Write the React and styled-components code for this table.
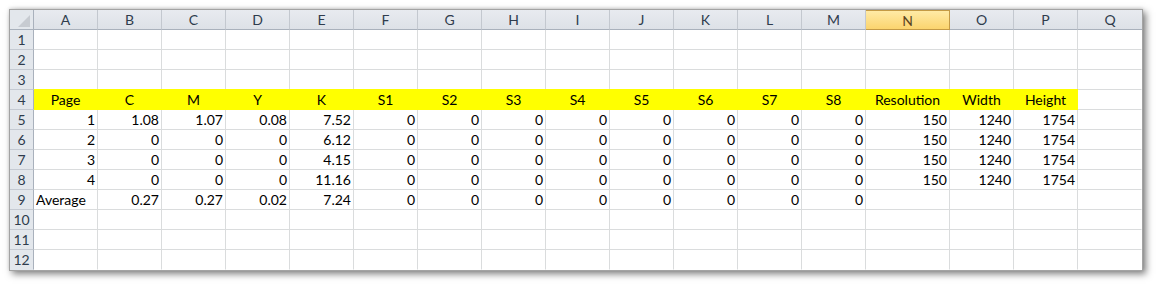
import React from 'react'
import styled, { createGlobalStyle, css } from 'styled-components'

const GlobalStyle = createGlobalStyle`
  html, body {
    margin: 0;
    padding: 0;
    background: #ffffff;
  }
`

const Page = styled.div`
  padding: 9px 0 0 9px;
  width: 1158px;
  height: 284px;
  box-sizing: border-box;
`

const Sheet = styled.div`
  display: grid;
  grid-template-columns: 24px repeat(13, 64px) 84px repeat(3, 64px);
  grid-auto-rows: 20px;
  width: max-content;
  border: 1px solid #a3a3a3;
  background: #ffffff;
  box-shadow: 3px 3px 7px rgba(0, 0, 0, 0.5), 0 -1px 3px rgba(0, 0, 0, 0.12);
  font-family: Lato, "Liberation Sans", sans-serif;
  font-size: 14px;
  color: #000000;
`

const Corner = styled.div`
  position: relative;
  box-sizing: border-box;
  background: #e3e7ec;
  border-right: 1px solid #a9b1bc;
  border-bottom: 1px solid #a9b1bc;
  svg {
    position: absolute;
    right: 3px;
    bottom: 2px;
  }
`

const ColHeader = styled.div`
  box-sizing: border-box;
  display: flex;
  align-items: center;
  justify-content: center;
  line-height: 19px;
  color: #2f3c4d;
  background: linear-gradient(#e8ebf0, #dde1e7);
  border-right: 1px solid #c3c8cf;
  border-bottom: 1px solid #a9b1bc;
  ${p => p.$selected && css`
    color: #5b4522;
    background: linear-gradient(#ffeaa6, #fbd46e);
    border: 1px solid #c49a45;
    border-left: none;
  `}
  ${p => p.$last && css`
    border-right: none;
  `}
`

const RowHeader = styled.div`
  box-sizing: border-box;
  display: flex;
  align-items: center;
  justify-content: center;
  line-height: 19px;
  color: #2f3c4d;
  background: #e3e7ec;
  border-right: 1px solid #a9b1bc;
  border-bottom: 1px solid ${p => (p.$last ? 'transparent' : '#c5cad2')};
`

const Cell = styled.div`
  box-sizing: border-box;
  padding: 0 2px;
  line-height: 19px;
  white-space: nowrap;
  overflow: hidden;
  text-align: ${p => p.$align};
  border-right: 1px solid ${p => (p.$lastCol ? 'transparent' : '#dadcdd')};
  border-bottom: 1px solid ${p => (p.$lastRow ? 'transparent' : '#dadcdd')};
  ${p => p.$fill && css`
    background: #ffff00;
    border-right-color: #ffff00;
    border-bottom-color: #ffff00;
    box-shadow: 0 -1px 0 #ffff00;
  `}
`

const columns = ['A', 'B', 'C', 'D', 'E', 'F', 'G', 'H', 'I', 'J', 'K', 'L', 'M', 'N', 'O', 'P', 'Q']

const zeros = Array(8).fill('0')
const dims = ['150', '1240', '1754']

const data = {
  4: ['Page', 'C', 'M', 'Y', 'K', 'S1', 'S2', 'S3', 'S4', 'S5', 'S6', 'S7', 'S8', 'Resolution', 'Width', 'Height'],
  5: ['1', '1.08', '1.07', '0.08', '7.52', ...zeros, ...dims],
  6: ['2', '0', '0', '0', '6.12', ...zeros, ...dims],
  7: ['3', '0', '0', '0', '4.15', ...zeros, ...dims],
  8: ['4', '0', '0', '0', '11.16', ...zeros, ...dims],
  9: ['Average', '0.27', '0.27', '0.02', '7.24', ...zeros],
}

const alignFor = (row, value) => {
  if (row === 4) return 'center'
  if (value && isNaN(Number(value))) return 'left'
  return 'right'
}

const rows = Array.from({ length: 12 }, (_, i) => i + 1)

const App = () => (
  <Page>
    <GlobalStyle />
    <Sheet>
      <Corner>
        <svg width="12" height="12" viewBox="0 0 12 12">
          <polygon points="12,0 12,12 0,12" fill="#c7cbd1" />
        </svg>
      </Corner>
      {columns.map((c, i) => (
        <ColHeader key={c} $selected={c === 'N'} $last={i === columns.length - 1}>{c}</ColHeader>
      ))}
      {rows.map(r => (
        <React.Fragment key={r}>
          <RowHeader $last={r === 12}>{r}</RowHeader>
          {columns.map((c, i) => {
            const value = (data[r] || [])[i] || ''
            return (
              <Cell
                key={c}
                $align={alignFor(r, value)}
                $fill={r === 4 && i < 16}
                $lastCol={i === columns.length - 1}
                $lastRow={r === 12}
              >
                {value}
              </Cell>
            )
          })}
        </React.Fragment>
      ))}
    </Sheet>
  </Page>
)

export default App
